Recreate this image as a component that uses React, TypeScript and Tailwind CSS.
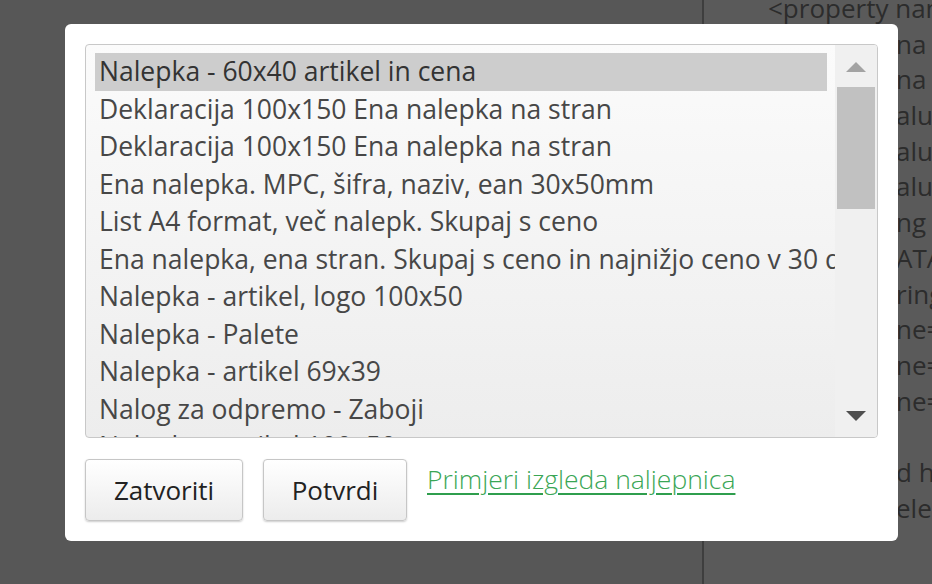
import React from 'react';

const ITEMS = [
  'Nalepka - 60x40 artikel in cena',
  'Deklaracija 100x150 Ena nalepka na stran',
  'Deklaracija 100x150 Ena nalepka na stran',
  'Ena nalepka. MPC, šifra, naziv, ean 30x50mm',
  'List A4 format, več nalepk. Skupaj s ceno',
  'Ena nalepka, ena stran. Skupaj s ceno in najnižjo ceno v 30 dneh',
  'Nalepka - artikel, logo 100x50',
  'Nalepka - Palete',
  'Nalepka - artikel 69x39',
  'Nalog za odpremo - Zaboji',
  'Nalepka - artikel 100x50',
  'Nalepka - artikel 58x40',
];

// tails of the xml lines that stick out to the right of the dialog
const BG_TAILS = ['na', 'na', 'alue', 'alue', 'alue', 'ng', 'ATA', 'ring', 'ne=', 'ne=', 'ne=', '', 'd he', 'ele'];

export default function App() {
  return (
    <div
      className="relative h-[584px] w-[932px] overflow-hidden bg-[#575757]"
      style={{ fontFamily: '"Open Sans", "Noto Sans", sans-serif' }}
    >
      {/* page behind the overlay */}
      <div className="flex h-full">
        <div className="w-[704px] border-r-2 border-[#3e3e3e]" />
        <div className="flex-1 overflow-hidden bg-[#5a5a5a]">
          <div className="-mt-[9px] whitespace-nowrap text-[26px] leading-[35.7px] text-[#2c2c2c]">
            <div className="h-[35.7px] pl-[64px]">{'<property name="'}</div>
            {BG_TAILS.map((l, i) => (
              <div key={i} className="h-[35.7px] pl-[192px]">
                {l}
              </div>
            ))}
          </div>
        </div>
      </div>

      {/* dialog */}
      <div className="absolute left-[65px] top-[24px] flex h-[517px] w-[833px] flex-col rounded-[6px] bg-white p-[20px]">
        <div className="flex h-[394px] overflow-hidden rounded-[4px] border border-[#c8c8c8] bg-gradient-to-b from-[#fbfbfb] to-[#ededed]">
          <div className="flex-1 overflow-hidden pl-[9px] pr-[8px] pt-[8px]">
            {ITEMS.map((t, i) => (
              <div
                key={i}
                className={
                  'h-[37.5px] whitespace-nowrap pl-[4px] text-[26.5px] leading-[37.5px] ' +
                  (i === 0 ? 'bg-[#cdcdcd] text-[#333]' : 'text-[#474747]')
                }
              >
                {t}
              </div>
            ))}
          </div>
          <div className="flex w-[42px] flex-col items-center bg-[#f0f0f0] pr-[1px] pt-[17px]">
            <svg width="20" height="10" viewBox="0 0 20 10">
              <polygon points="0,10 10,0 20,10" fill="#a3a3a3" />
            </svg>
            <div className="mt-[15px] h-[122px] w-[38px] bg-[#c1c1c1]" />
            <div className="flex-1" />
            <svg width="20" height="10" viewBox="0 0 20 10" className="mb-[16px]">
              <polygon points="0,0 20,0 10,10" fill="#4f4f4f" />
            </svg>
          </div>
        </div>

        <div className="mt-[21px] flex items-start gap-[20px]">
          <button className="h-[62px] w-[158px] rounded-[4px] border border-[#c6c6c6] bg-gradient-to-b from-white to-[#ececec] text-[26px] text-[#222] shadow-[0_1px_2px_rgba(0,0,0,0.2)]">
            Zatvoriti
          </button>
          <button className="h-[62px] w-[144px] rounded-[4px] border border-[#c6c6c6] bg-gradient-to-b from-white to-[#ececec] text-[26px] text-[#222] shadow-[0_1px_2px_rgba(0,0,0,0.2)]">
            Potvrdi
          </button>
          <a
            href="#"
            className="mt-[2px] text-[26.5px] font-light leading-[36px] text-[#3aa655] underline decoration-[#2f9e4d] decoration-2 underline-offset-[4px]"
          >
            Primjeri izgleda naljepnica
          </a>
        </div>
      </div>
    </div>
  );
}
